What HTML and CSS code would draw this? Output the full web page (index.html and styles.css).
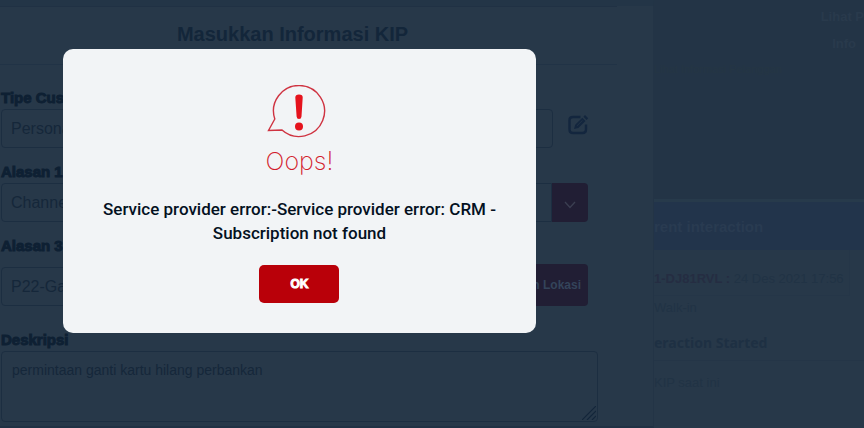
FILE: index.html
```html
<!DOCTYPE html>
<html lang="id">
<head>
<meta charset="utf-8">
<meta name="viewport" content="width=device-width, initial-scale=1">
<title>Masukkan Informasi KIP</title>
<link rel="stylesheet" href="styles.css">
</head>
<body>
<div class="page">
  <main class="panel">
    <header class="panel-head"><h1>Masukkan Informasi KIP</h1></header>
    <form class="form">
      <div class="field">
        <label for="tipe">Tipe Customer</label>
        <div class="row">
          <input class="control narrow" id="tipe" type="text" value="Personal">
          <button class="edit" type="button" aria-label="Edit">
            <svg viewBox="0 0 20 20" width="20" height="20" fill="none">
              <path d="M12.500 2H5Q1.500 2 1.500 5V14.500Q1.500 18 5 18H14.500Q18 18 18 14.500V9.500" stroke="currentColor" stroke-width="2.400"/>
              <path d="M6 14L7.200 9.800L14.300 2.800L17.500 6L10.300 12.900ZM15.400 1.700L17 .1L20.200 3.300L18.600 4.900Z" fill="currentColor"/>
              <path d="M9 10.800L14.500 5.400" stroke="#273849" stroke-width=".7"/>
            </svg>
          </button>
        </div>
      </div>
      <div class="field">
        <label for="alasan1">Alasan 1</label>
        <div class="row combo">
          <select class="control" id="alasan1"><option>Channel</option></select>
          <span class="arrow"><svg viewBox="0 0 12 8" width="12" height="8" fill="none"><path d="M1 1L6 6.500L11 1" stroke="currentColor" stroke-width="1.300"/></svg></span>
        </div>
      </div>
      <div class="field place">
        <label for="alasan3">Alasan 3</label>
        <div class="row combo">
          <input class="control" id="alasan3" type="text" value="P22-Ganti Kartu">
          <button class="location" type="button">Pilihan Lokasi</button>
        </div>
      </div>
      <div class="field note">
        <label for="deskripsi">Deskripsi</label>
        <textarea class="control" id="deskripsi">permintaan ganti kartu hilang perbankan</textarea>
        <svg class="grip" viewBox="0 0 14 14" width="14" height="14" fill="none"><path d="M0 14L14 0M5 14L14 5M10 14L14 10" stroke="currentColor" stroke-width="1.200"/></svg>
      </div>
    </form>
    <div class="overlay">
      <section class="dialog" role="alertdialog" aria-labelledby="oops" aria-describedby="message">
        <svg class="bubble" viewBox="0 0 66 54" width="66" height="54" fill="none">
          <path d="M8.800 34A25.500 25.500 0 1 1 16 45L2.500 45.500Z" stroke="#cf3341" stroke-width="1.400"/>
          <path d="M29.300 12.500Q29.300 9.500 33 9.500Q36.900 9.500 36.700 12.500L35.500 31.500Q35.300 34 33 34Q30.800 34 30.600 31.500Z" fill="#e5131d"/>
          <circle cx="33" cy="41.500" r="4" fill="#e5131d"/>
        </svg>
        <h2 id="oops">Oops!</h2>
        <p id="message">Service provider error:-Service provider error: CRM - Subscription not found</p>
        <button class="ok" type="button">OK</button>
      </section>
    </div>
  </main>
  <aside class="side">
    <div class="summary">
      <a href="#lihat">Lihat P</a>
      <a href="#info">Info</a>
      <p>Lihat Informasi Pelanggan</p>
    </div>
    <h2 class="side-title">rent interaction</h2>
    <div class="activity">
      <p class="entry"><strong>1-DJ81RVL :</strong> 24 Des 2021 17:56</p>
      <p class="channel">Walk-in</p>
      <h3>eraction Started</h3>
      <p class="current">KIP saat ini</p>
    </div>
  </aside>
</div>
</body>
</html>
```
FILE: styles.css
```css
* { box-sizing: border-box; }
body, h1, h2, h3, p { margin: 0; }
body {
  background: #233446;
  color: #15273a;
  font-family: "Liberation Sans", Arial, sans-serif;
  font-size: 14px;
}
button, input, select, textarea { font: inherit; color: inherit; }
.page {
  display: grid;
  grid-template-columns: minmax(0, 1fr) 210px;
  min-height: 100vh;
  overflow: hidden;
}
.panel {
  position: relative;
  background: #273849;
  border-top: 6px solid #233547;
  border-right: 1px solid #233446;
  border-bottom: 2px solid #203144;
}
.panel-head {
  margin-right: 36px;
  height: 59px;
  padding-top: 15px;
  border-top: 1px solid #203144;
  border-bottom: 1px solid #213346;
  text-align: center;
}
.panel-head h1 {
  padding-right: 32px;
  font-size: 20px;
  line-height: 24px;
  color: #13263a;
}
.form { padding: 24px 56px 0 1px; }
.field { margin-bottom: 15px; }
.field label {
  display: block;
  height: 20px;
  line-height: 18px;
  font-size: 15px;
  font-weight: 700;
  color: #0e2033;
  -webkit-text-stroke: 1px currentColor;
}
.row { display: flex; align-items: center; }
.control {
  flex: 1;
  width: 100%;
  min-width: 0;
  height: 39px;
  padding: 0 9px;
  border: 1px solid #1c2e41;
  border-radius: 4px;
  background: transparent;
  font-size: 16px;
  appearance: none;
}
.narrow { margin-right: 15px; }
.edit {
  margin: 0 9px 8px 0;
  width: 20px;
  height: 20px;
  padding: 0;
  border: 0;
  background: none;
  color: #13263e;
}
.edit svg { display: block; overflow: visible; }
.combo { align-items: flex-end; padding-right: 9px; }
.combo .control { border-radius: 4px 0 0 4px; }
.arrow {
  display: flex;
  align-items: center;
  justify-content: center;
  width: 36px;
  height: 39px;
  padding-top: 4px;
  border-radius: 0 4px 4px 0;
  background: #211e34;
  color: #3b3f51;
}
.place label { height: 27px; }
.place { margin-bottom: 25px; }
.place .control { border-radius: 4px; }
.location {
  width: 108px;
  height: 42px;
  padding: 0 7px;
  border: 0;
  border-radius: 4px;
  background: #211e34;
  color: #34445a;
  font-size: 12px;
  font-weight: 700;
  text-align: right;
}
.note { position: relative; margin: 0 -1px 4px 0; }
textarea.control {
  display: block;
  height: 71px;
  padding: 9px 10px;
  font-size: 14px;
  line-height: 18px;
  resize: none;
}
.grip {
  position: absolute;
  right: 2px;
  bottom: 2px;
  color: #13263a;
}
.overlay {
  position: absolute;
  top: 43px;
  left: 0;
  right: 54px;
  display: flex;
  justify-content: center;
}
.dialog {
  display: flex;
  flex-direction: column;
  align-items: center;
  width: 79%;
  min-height: 284px;
  padding: 36px 32px 30px;
  border-radius: 10px;
  background: #f2f4f6;
  text-align: center;
}
.dialog h2 {
  margin-top: 7px;
  font-family: Inter, Lato, sans-serif;
  font-size: 25px;
  font-weight: 200;
  line-height: 30px;
  color: #d31c2d;
}
.dialog p {
  margin-top: 21px;
  font-family: Roboto, sans-serif;
  font-size: 17px;
  font-weight: 500;
  line-height: 24px;
  color: #04111f;
}
.ok {
  width: 80px;
  height: 38px;
  margin-top: 20px;
  border: 0;
  border-radius: 5px;
  background: #b90009;
  color: #fff;
  font-size: 12px;
  font-weight: 700;
  -webkit-text-stroke: 1px currentColor;
}
.side {
  min-width: 0;
  overflow: hidden;
  white-space: nowrap;
  background: #273849;
}
.summary {
  display: grid;
  grid-template-rows: 27px 25px 18px;
  height: 199px;
  padding-top: 8px;
  background: #233446;
}
.summary a {
  justify-self: end;
  font-size: 13px;
  font-weight: 700;
  line-height: 18px;
  color: #293a4c;
  text-decoration: none;
}
.summary a + a { padding-right: 8px; }
.summary p { font-size: 11px; line-height: 18px; color: #253644; }
.side-title {
  height: 51px;
  border-top: 3px solid #273a4b;
  background: #22344b;
  color: #293b51;
  font-size: 15px;
  line-height: 50px;
}
.activity { color: #213345; }
.entry {
  height: 46px;
  margin-right: 14px;
  padding-top: 20px;
  border-right: 1px solid #253648;
  border-bottom: 1px solid #253648;
  font-size: 13px;
  line-height: 18px;
}
.entry strong { color: #252d42; }
.channel { padding-top: 3px; font-size: 13px; line-height: 18px; }
.activity h3 {
  height: 44px;
  padding-top: 17px;
  border-bottom: 1px solid #243547;
  font-family: "Noto Sans", sans-serif;
  font-size: 14px;
  line-height: 18px;
  color: #1e3043;
}
.current { padding-top: 13px; font-size: 13px; line-height: 18px; }
```
